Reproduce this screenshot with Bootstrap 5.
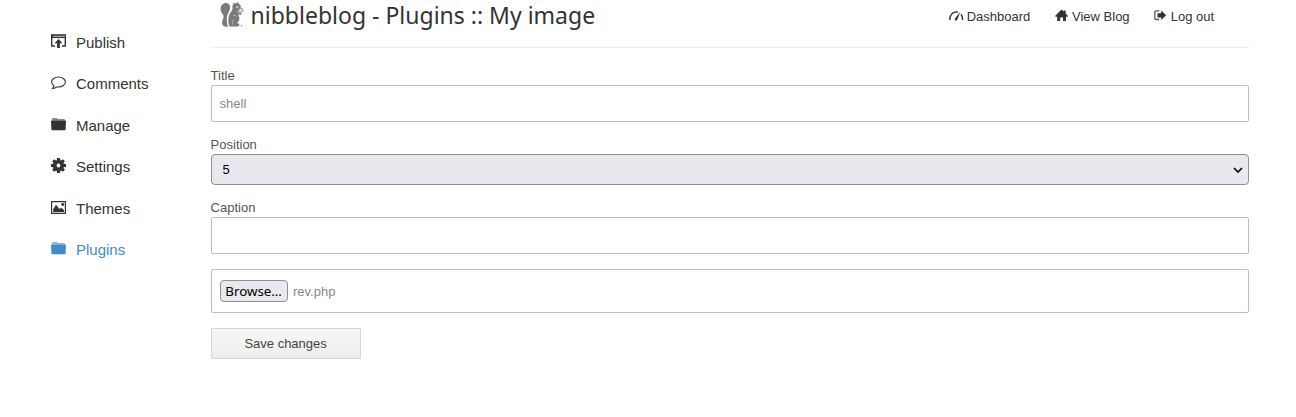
<!DOCTYPE html>
<html lang="en">
<head>
<meta charset="utf-8">
<meta name="viewport" content="width=device-width, initial-scale=1">
<title>nibbleblog - Plugins :: My image</title>
<link href="https://cdn.jsdelivr.net/npm/bootstrap@5.3.0/dist/css/bootstrap.min.css" rel="stylesheet">
<style>
body { font-family: "Liberation Sans", Arial, sans-serif; font-size: 13px; line-height: 17px; color: #333; background: #fff; height: 417px; overflow: hidden; }
svg { display: block; flex: none; }
.sidebar { width: 210.6px; padding: 21.6px 0 0 51px; }
.sidebar .nav-link { height: 41.45px; padding: 0; gap: 10px; font-size: 15px; color: #333; }
.sidebar .nav-link.active { color: #428bca; }
.sidebar svg { margin-top: -2px; }
.content { width: 1038px; }
.topbar { height: 48px; border-bottom: 1px solid #eee; padding-right: 34.5px; }
.blog-title { font: 400 23px/30px "Noto Sans", sans-serif; color: #333; }
.brand { height: 30px; gap: 5.6px; padding-left: 8.4px; }
.toplinks { gap: 24.5px; height: 32px; }
.toplinks a { color: #333; gap: 3px; }
.toplinks svg { margin-left: -.4px; }
.toplinks a:first-child { margin-right: .6px; }
form { padding-top: 20px; }
form label { display: block; height: 17px; line-height: 16px; color: #555; }
.field { margin-bottom: 15px; }
.form-control { height: 37px; border: 1px solid #bfbfbf; border-radius: 2px; padding: 0 8px; font-size: 13px; color: #888; }
.form-select { height: 31px; border: 1px solid #8f8f9d; border-radius: 4px; background-color: #e9e9ed; background-image: url("data:image/svg+xml,%3Csvg xmlns='http://www.w3.org/2000/svg' viewBox='0 0 10 7'%3E%3Cpath d='M1 1l4 4 4-4' fill='none' stroke='%23000' stroke-width='1.7'/%3E%3C/svg%3E"); background-size: 10px 7px; background-position: right 5px top 12px; padding: 0 11px; font-size: 13px; color: #000; }
.filebox { height: 44px; gap: 5.4px; }
.filebox span { padding-top: 1px; }
.browse { height: 22px; width: 68px; padding: 0; border: 1px solid #8f8f9d; border-radius: 4px; background: #e9e9ed; color: #000; font: 13.33px/20px "Noto Sans", sans-serif; }
.save { width: 150px; height: 31px; padding: 0; border: 1px solid #d6d6d6; border-radius: 1px; background: linear-gradient(#f6f6f6, #eee); font-size: 13px; color: #444; }
</style>
</head>
<body>
<div class="d-flex">
  <nav class="sidebar nav flex-column flex-nowrap flex-shrink-0">
    <a class="nav-link d-flex align-items-center" href="#">
      <svg width="15" height="15" viewBox="0 0 15 15"><path d="M4 12H.7V1.200h13.600V12H11" fill="none" stroke="#333" stroke-width="1.400"/><path d="M0 .5h15v3.600H0z" fill="#333"/><path d="M2 2.300h12" stroke="#ccc" stroke-width="1"/><path d="M7.500 5L11.500 9.200H8.900V14H6.100V9.200H3.500z" fill="#333"/></svg>
      Publish</a>
    <a class="nav-link d-flex align-items-center" href="#">
      <svg width="15" height="15" viewBox="0 0 15 15"><path d="M2.900 10.800C1.500 9.900.6 8.500.6 7 .6 4.200 3.700 2 7.500 2s6.900 2.200 6.900 5-3.100 5-6.900 5q-.8 0-1.500-.1Q4.200 13.300 1.600 13.500 2.900 12.300 2.900 10.800z" fill="none" stroke="#333" stroke-width="1.100"/></svg>
      Comments</a>
    <a class="nav-link d-flex align-items-center" href="#">
      <svg width="15" height="15" viewBox="0 0 15 15"><path d="M1 4V2q0-1 1-1h4l1 1h6q1 0 1 1v1z" fill="#888"/><path d="M0 3.800h15l-.4 8.500q-.1 1-1 1H1.400q-.9 0-1-1z" fill="#333"/></svg>
      Manage</a>
    <a class="nav-link d-flex align-items-center" href="#">
      <svg width="15" height="15" viewBox="0 0 15 15" style="margin-top:-3px"><g fill="#333"><path fill-rule="evenodd" d="M7.500 2a5.500 5.500 0 1 0 0 11 5.500 5.500 0 0 0 0-11zm0 3.600a1.900 1.900 0 1 1 0 3.800 1.900 1.900 0 0 1 0-3.800z"/><path id="tooth" d="M6 0h3l.3 3H5.700z"/><use href="#tooth" transform="rotate(45 7.500 7.500)"/><use href="#tooth" transform="rotate(90 7.500 7.500)"/><use href="#tooth" transform="rotate(135 7.500 7.500)"/><use href="#tooth" transform="rotate(180 7.500 7.500)"/><use href="#tooth" transform="rotate(225 7.500 7.500)"/><use href="#tooth" transform="rotate(270 7.500 7.500)"/><use href="#tooth" transform="rotate(315 7.500 7.500)"/></g></svg>
      Settings</a>
    <a class="nav-link d-flex align-items-center" href="#">
      <svg width="15" height="15" viewBox="0 0 15 15"><path d="M.6 1.600h13.800v11.800H.6z" fill="none" stroke="#333" stroke-width="1.200"/><path d="M2 12l.3-3L5 4.800 8.500 9l1.500-1.300 3 2.300V12z" fill="#333"/><circle cx="11.700" cy="4.500" r="1.400" fill="#333"/></svg>
      Themes</a>
    <a class="nav-link active d-flex align-items-center" href="#">
      <svg width="15" height="15" viewBox="0 0 15 15"><path d="M1 4V2q0-1 1-1h4l1 1h6q1 0 1 1v1z" fill="#8bbbe2"/><path d="M0 3.800h15l-.4 8.500q-.1 1-1 1H1.400q-.9 0-1-1z" fill="#428bca"/></svg>
      Plugins</a>
  </nav>
  <main class="content flex-shrink-0">
    <header class="topbar d-flex justify-content-between align-items-start">
      <div class="brand d-flex align-items-center">
        <svg width="26" height="26" viewBox="0 0 26 26"><path d="M9 24.500C6 25 4 24.500 3.200 22 2.500 19 4.500 16.500 4.700 14.500 4.800 12.500 1.600 11 1.600 7 1.600 3.500 4 1 7 1c2.800 0 4.300 2.300 4.100 5C10.900 8.800 9 11 8.300 13.500 7.500 17 7.700 21 9 24.500z" fill="#7a7a7a"/><path d="M10.500 24.500C9 21 8.900 17 10 13.500c.8-2.500 2.500-4 3.500-6C13.200 4 13.500 2.800 14.500 1.500V.5l1.500 1 2-.5.8-1 .7 1.500C21 2.200 22 3.500 22 5L20 7.500l-1 1 .5 1.800 2.500.7c1 .4.8 1.800-.3 1.800L19 12.500c1.500 2 2 4.500.5 7L18 21q2.500.5 2.500 1.800 0 1.700-2 1.700z" fill="#7a7a7a"/><path d="M14 13.500q3-1 4 1.500M15 17.500q-2.500 1.500-1.500 5" stroke="#bbb" stroke-width=".8" fill="none"/><path d="M17 5.500l2.500-1" stroke="#fff" stroke-width="1"/><circle cx="22" cy="8.200" r="2" fill="#ddd" stroke="#8a8a8a" stroke-width=".8"/><circle cx="22.600" cy="23.700" r=".8" fill="#999"/></svg>
        <h1 class="blog-title m-0 text-nowrap">nibbleblog - Plugins :: My image</h1>
      </div>
      <div class="toplinks d-flex align-items-center">
        <a class="d-flex align-items-center text-decoration-none" href="#"><svg width="15" height="14" viewBox="0 0 15 14"><path d="M.900 11Q.5 6.800 3.200 4.400 6 2.300 9 3.200M12 5.200q1.800 2.300 1.500 5.800" fill="none" stroke="#333" stroke-width="1.400"/><path d="M11.600 2.500L8.200 10.700a1.300 1.300 0 0 1-2.400-1z" fill="#333"/></svg>Dashboard</a>
        <a class="d-flex align-items-center text-decoration-none" href="#"><svg width="14" height="14" viewBox="0 0 14 14"><path d="M6.500.5l2.200 2V1.500h2v3l2.300 2.500-.6.700H11V12H8V8.500H5.200V12H2.200V7.700H.7L.1 7z" fill="#333"/></svg>View Blog</a>
        <a class="d-flex align-items-center text-decoration-none" href="#"><svg width="14" height="14" viewBox="0 0 14 14"><path d="M5.200 1.900H2.700Q.8 1.900.8 3.500v5.400q0 1.600 1.900 1.600h2.500" fill="none" stroke="#555" stroke-width="1.300"/><path d="M3.500 4.200H7.200V1.500l5 4.800-5 4.800V8.400H3.500z" fill="#333"/></svg>Log out</a>
      </div>
    </header>
    <form>
      <div class="field"><label for="title">Title</label><input class="form-control" id="title" value="shell"></div>
      <div class="field"><label for="position">Position</label><select class="form-select" id="position"><option>5</option></select></div>
      <div class="field"><label for="caption">Caption</label><input class="form-control" id="caption"></div>
      <div class="field form-control filebox d-flex align-items-center"><button type="button" class="browse">Browse…</button><span>rev.php</span></div>
      <button type="button" class="btn save">Save changes</button>
    </form>
  </main>
</div>
<script src="https://cdn.jsdelivr.net/npm/bootstrap@5.3.0/dist/js/bootstrap.bundle.min.js"></script>
</body>
</html>
